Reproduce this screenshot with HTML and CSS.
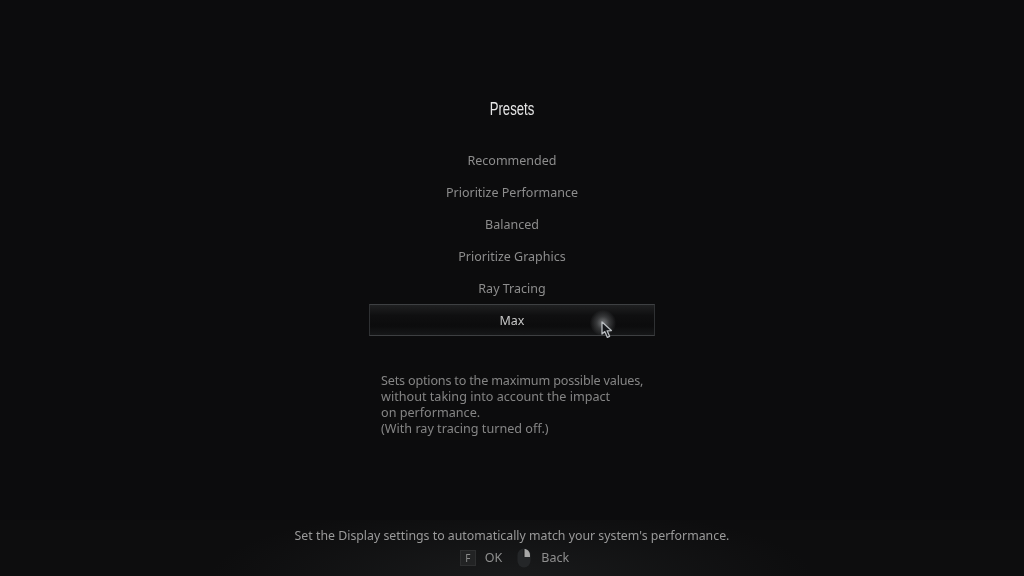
FILE: index.html
```html
<!DOCTYPE html>
<html lang="en">
<head>
<meta charset="utf-8">
<title>Presets</title>
<link rel="stylesheet" href="styles.css">
</head>
<body>
<main class="screen">
  <section class="panel">
    <h1 class="title">Presets</h1>
    <ul class="options">
      <li class="option">Recommended</li>
      <li class="option">Prioritize Performance</li>
      <li class="option">Balanced</li>
      <li class="option">Prioritize Graphics</li>
      <li class="option">Ray Tracing</li>
      <li class="option selected">Max
        <span class="glow"></span>
        <svg class="cursor" width="12" height="18" viewBox="0 0 12 18"><path d="M1 1 L1 13 L3.8 10.6 L6.4 16.4 L8.6 15.3 L6.1 9.8 L10.4 9.6 Z" fill="#15171a" stroke="#b9bdc0" stroke-width="1.3" stroke-linejoin="round"/></svg>
      </li>
    </ul>
    <p class="description"><span class="tight">Sets options to the maximum possible values,</span><br>without taking into account the impact<br>on performance.<br>(With ray tracing turned off.)</p>
  </section>
  <footer class="footer">
    <p class="hint">Set the Display settings to automatically match your system's performance.</p>
    <div class="controls">
      <span class="key">F</span>
      <span class="label ok">OK</span>
      <svg class="mouse" width="14" height="20" viewBox="0 0 14 20"><rect x="0.5" y="0.5" width="13" height="19" rx="6.5" fill="#242628"/><path d="M7 1 C10.5 1 13 3.5 13 7.5 L13 9 L7 9 Z" fill="#a8a8a8"/><path d="M7 1 L7 9" stroke="#111" stroke-width="1"/></svg>
      <span class="label">Back</span>
    </div>
  </footer>
</main>
</body>
</html>
```
FILE: styles.css
```css
* { box-sizing: border-box; }
html, body { margin: 0; padding: 0; background: #0c0c0d; }
.screen {
  width: 1024px;
  height: 576px;
  overflow: hidden;
  display: flex;
  flex-direction: column;
  justify-content: space-between;
  font-family: "Noto Sans", "Open Sans", sans-serif;
  background: #0c0c0d;
  color: #8c8c8c;
  filter: blur(0.35px);
}
.panel { width: 286px; margin: 0 auto; padding-top: 97px; }
.title {
  margin: 0;
  height: 47px;
  line-height: 24px;
  font-family: "Liberation Sans", sans-serif;
  font-size: 17.5px;
  font-weight: 400;
  text-align: center;
  color: #e6e6e6;
  transform: scaleX(0.75);
}
.options { margin: 0; padding: 0; list-style: none; }
.option {
  position: relative;
  height: 32px;
  line-height: 34px;
  text-align: center;
  font-size: 12.5px;
  color: #8d8d8d;
}
.selected {
  line-height: 32px;
  color: #c8c8c8;
  border: 1px solid #3e4042;
  border-left-color: #2f3133;
  border-right-color: #2f3133;
  background: linear-gradient(180deg, #1f2021 0%, #0f0f10 35%, #0c0c0d 70%, #161718 100%);
}
.glow {
  position: absolute;
  left: 220px;
  top: 5px;
  width: 26px;
  height: 26px;
  border-radius: 50%;
  background: radial-gradient(circle, #77797b 0%, rgba(90,92,94,0.55) 35%, rgba(60,60,60,0) 72%);
}
.cursor { position: absolute; left: 231px; top: 16px; }
.description {
  margin: 36px 0 0;
  padding-left: 12px;
  font-size: 12.62px;
  line-height: 16px;
  color: #858585;
  white-space: nowrap;
  position: relative;
  top: 1px;
}
.tight { letter-spacing: -0.19px; }
.footer {
  height: 56px;
  padding-top: 6px;
  text-align: center;
  background: radial-gradient(ellipse 300px 70px at 50% 100%, #191a1b 0%, #0d0d0e 100%);
}
.hint { margin: 0; height: 22px; line-height: 20px; font-size: 12.33px; color: #9a9a9a; white-space: nowrap; }
.controls { display: flex; justify-content: center; align-items: center; height: 20px; color: #8f8f8f; font-size: 12.5px; padding-left: 5px; }
.key {
  width: 16px; height: 16px; line-height: 15px; font-size: 10px;
  background: #222324; border: 1px solid #2e2f30; color: #8a8a8a;
}
.label { line-height: 20px; }
.ok { margin-left: 9px; margin-right: 15px; }
.mouse { margin-right: 10px; margin-top: -1px; }
```
